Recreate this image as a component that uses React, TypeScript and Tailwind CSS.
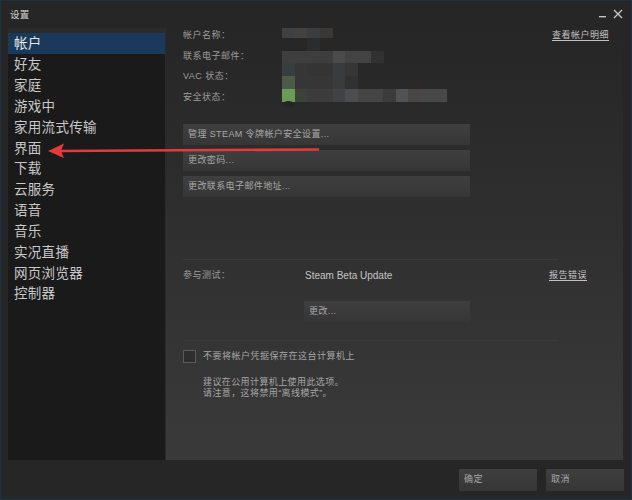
import React from "react";

const navItems = [
  "帐户",
  "好友",
  "家庭",
  "游戏中",
  "家用流式传输",
  "界面",
  "下载",
  "云服务",
  "语音",
  "音乐",
  "实况直播",
  "网页浏览器",
  "控制器",
];

type R = [number, number, number, number, string];
const mosaic: R[] = [
  [0, 0, 13, 10, "#3d4143"],
  [13, 0, 12, 10, "#46413f"],
  [25, 0, 13, 10, "#393d41"],
  [38, 0, 13, 10, "#3b3735"],
  [25, 10, 13, 13, "#2c2c2c"],
  [0, 23, 51, 12, "#3e3e3e"],
  [51, 23, 12, 12, "#4b4b4b"],
  [63, 23, 26, 12, "#434343"],
  [89, 23, 13, 12, "#313131"],
  [0, 35, 13, 13, "#3a3d3d"],
  [13, 35, 12, 13, "#363636"],
  [25, 35, 26, 13, "#343434"],
  [51, 35, 12, 13, "#383c3f"],
  [63, 35, 13, 13, "#363636"],
  [0, 48, 13, 13, "#4b5b49"],
  [13, 48, 38, 13, "#363636"],
  [51, 48, 12, 13, "#3b3b3b"],
  [63, 48, 13, 13, "#313131"],
  [0, 61, 13, 13, "#6b9a59"],
  [13, 61, 12, 13, "#3a433a"],
  [25, 61, 26, 13, "#3c3c3c"],
  [51, 61, 12, 13, "#404345"],
  [63, 61, 13, 13, "#4b4e51"],
  [76, 61, 25, 13, "#454545"],
  [101, 61, 13, 13, "#3b3b3b"],
  [114, 61, 12, 13, "#505353"],
  [126, 61, 13, 13, "#4b4543"],
  [139, 61, 26, 13, "#484848"],
];

function Btn({ children, className }: { children: React.ReactNode; className: string }) {
  return (
    <div
      className={
        "flex items-center pl-[5px] text-[9px] tracking-[0.4px] text-[#a8a8a8] bg-linear-to-b from-[#3f3f3f] to-[#363636] " +
        className
      }
    >
      {children}
    </div>
  );
}

export default function App() {
  return (
    <div
      className="relative w-[632px] h-[500px] bg-[#262626] border border-[#1e3244] overflow-hidden flex flex-col"
      style={{ fontFamily: '"Liberation Sans", "Noto Sans CJK SC", sans-serif' }}
    >
      {/* title bar */}
      <div className="h-[27px] flex items-start justify-between pl-[9px] pr-[8px]">
        <div className="mt-[8px] text-[9.5px] leading-[12px] text-[#d2d2d2] tracking-[0.3px]">设置</div>
        <div className="flex items-start gap-[6px] mt-[8px]">
          <svg width="8" height="10" viewBox="0 0 8 10">
            <rect x="0" y="7" width="7" height="1.4" fill="#c4c4c4" />
          </svg>
          <svg width="10" height="10" viewBox="0 0 10 10">
            <path d="M1 1 L9 9 M9 1 L1 9" stroke="#c4c4c4" strokeWidth="1.4" />
          </svg>
        </div>
      </div>

      {/* main */}
      <div className="flex h-[432px] ml-[7px] mr-[8px]">
        {/* sidebar */}
        <div className="w-[158px] bg-[#1a1a1a] border-r border-[#2b2b2b] flex flex-col">
          <div className="h-[5px] bg-[#2a2a2a]" />
          {navItems.map((n, i) => (
            <div
              key={n}
              className={
                "h-[20.85px] flex items-center pl-[6px] pt-[2px] text-[13.5px] tracking-[0.3px] " +
                (i === 0 ? "bg-[#1b3a5b] text-[#e6e6e6]" : "text-[#c8c8c8]")
              }
            >
              {n}
            </div>
          ))}
        </div>

        {/* panel */}
        <div className="flex-1 bg-linear-to-b from-[#262626] to-[#3a3a3a] pl-[17px] flex flex-col">
          {/* account info */}
          <div className="flex items-start h-[96px]">
            <div className="w-[99px] flex flex-col gap-[6.7px] text-[9px] tracking-[0.5px] text-[#9c9c9c]">
              <div className="h-[14px] leading-[14px]">帐户名称：</div>
              <div className="h-[14px] leading-[14px]">联系电子邮件：</div>
              <div className="h-[14px] leading-[14px]">VAC 状态：</div>
              <div className="h-[14px] leading-[14px]">安全状态：</div>
            </div>
            <svg width="166" height="82" viewBox="0 0 166 82">
              {mosaic.map((r, i) => (
                <rect key={i} x={r[0]} y={r[1]} width={r[2]} height={r[3]} fill={r[4]} />
              ))}
              <ellipse cx="6.5" cy="76" rx="6" ry="3" fill="#252525" />
            </svg>
            <div className="flex-1" />
            <div className="mr-[14px] h-[14px] leading-[14px] text-[9px] tracking-[0.5px] text-[#c2c2c2] underline underline-offset-2">
              查看帐户明细
            </div>
          </div>

          {/* buttons */}
          <div className="flex flex-col gap-[5px]">
            <Btn className="w-[287px] h-[21px]">管理 STEAM 令牌帐户安全设置...</Btn>
            <Btn className="w-[287px] h-[21px]">更改密码...</Btn>
            <Btn className="w-[287px] h-[21px]">更改联系电子邮件地址...</Btn>
          </div>

          <div className="mt-[62px] w-[375px] h-px bg-[#3b3b3b]" />

          {/* beta */}
          <div className="mt-[9px] flex items-center h-[14px] pr-[36px]">
            <div className="w-[122px] text-[9px] tracking-[0.5px] text-[#9c9c9c]">参与测试：</div>
            <div className="text-[10px] text-[#c4c4c4] -mt-[2px]">Steam Beta Update</div>
            <div className="flex-1" />
            <div className="text-[9px] tracking-[0.5px] text-[#c2c2c2] underline underline-offset-2">报告错误</div>
          </div>
          <div className="mt-[18px] ml-[121px]">
            <Btn className="w-[166px] h-[21px]">更改...</Btn>
          </div>

          <div className="mt-[18px] w-[375px] h-px bg-[#3b3b3b]" />

          {/* checkbox */}
          <div className="mt-[9px] flex items-center gap-[7px]">
            <div className="w-[13px] h-[13px] border border-[#5a5a5a] bg-[#2e2e2e]" />
            <div className="text-[9px] tracking-[0.5px] text-[#a6a6a6]">不要将帐户凭据保存在这台计算机上</div>
          </div>
          <div className="mt-[13px] pl-[20px] text-[9px] leading-[11px] tracking-[0.4px] text-[#a6a6a6]">
            <div>建议在公用计算机上使用此选项。</div>
            <div>请注意，这将禁用“离线模式”。</div>
          </div>
        </div>
      </div>

      {/* footer */}
      <div className="flex justify-end gap-[9px] pt-[9px] pr-[7px]">
        <Btn className="w-[78px] h-[22px]">确定</Btn>
        <Btn className="w-[78px] h-[22px]">取消</Btn>
      </div>

      {/* red annotation arrow */}
      <svg
        className="absolute left-0 top-0 pointer-events-none"
        width="632"
        height="500"
        viewBox="0 0 632 500"
      >
        <line x1="58" y1="150" x2="318" y2="148.5" stroke="#e8383a" strokeWidth="2.5" />
        <polygon points="47,150 63,142.5 60,150 63,157" fill="#e8383a" />
      </svg>
    </div>
  );
}
